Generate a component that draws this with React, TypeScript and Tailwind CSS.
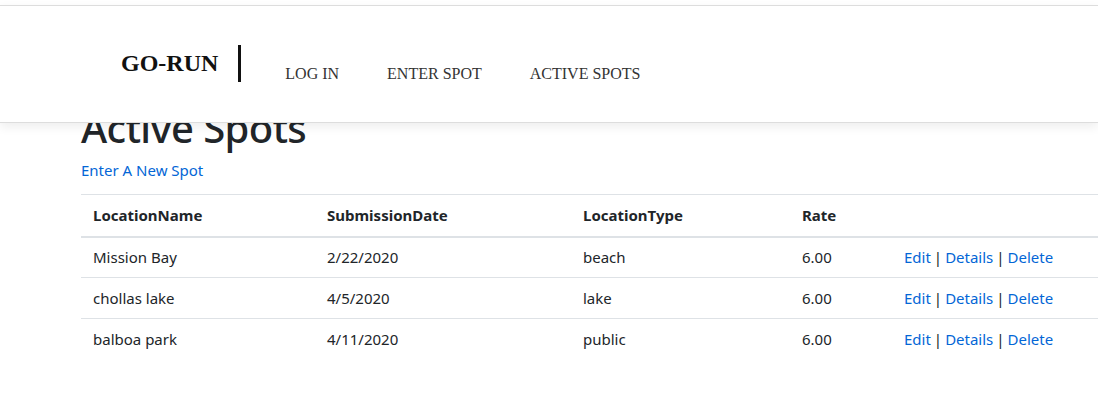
import React from 'react';

const spots = [
  { name: 'Mission Bay', date: '2/22/2020', type: 'beach', rate: '6.00' },
  { name: 'chollas lake', date: '4/5/2020', type: 'lake', rate: '6.00' },
  { name: 'balboa park', date: '4/11/2020', type: 'public', rate: '6.00' },
];

const sans = { fontFamily: '"Noto Sans", "Open Sans", sans-serif' };

export default function App() {
  return (
    <div className="min-h-[406px] bg-white overflow-hidden text-[#212529]" style={sans}>
      <div className="pt-[5px]">
        {/* Navbar */}
        <nav
          className="relative z-10 h-[118px] bg-white border-t border-b border-[#dddddd] shadow-[0_4px_10px_rgba(0,0,0,0.07)] flex items-center pl-[121px]"
          style={{ fontFamily: '"Liberation Serif", "Times New Roman", serif' }}
        >
          <span className="text-[24px] font-bold text-[#111] leading-none -mt-[2px]">GO-RUN</span>
          <span className="ml-[20px] w-[3px] h-[37px] bg-[#111] -mt-[2px]" />
          <div className="flex items-center ml-[20px] mt-[20px] text-[16px] text-[#333]">
            <a className="px-6">LOG IN</a>
            <a className="px-6">ENTER SPOT</a>
            <a className="px-6">ACTIVE SPOTS</a>
          </div>
        </nav>

        {/* Content */}
        <main className="-mt-[19px] pl-[81px]">
          <h1 className="text-[40px] font-medium leading-[48px] tracking-[-0.6px]">Active Spots</h1>
          <a className="block text-[15px] leading-[24px] text-[#0366d6] mt-[6px]">Enter A New Spot</a>

          <table className="mt-[12px] w-full border-collapse text-[15px]">
            <thead>
              <tr className="border-t border-[#dee2e6] border-b-2">
                <th className="w-[234px] h-[42px] px-3 text-left font-bold">LocationName</th>
                <th className="w-[256px] px-3 text-left font-bold">SubmissionDate</th>
                <th className="w-[219px] px-3 text-left font-bold">LocationType</th>
                <th className="w-[102px] px-3 text-left font-bold">Rate</th>
                <th className="px-3" />
              </tr>
            </thead>
            <tbody>
              {spots.map((s) => (
                <tr key={s.name} className="border-t border-[#dee2e6]">
                  <td className="h-[41px] px-3">{s.name}</td>
                  <td className="px-3">{s.date}</td>
                  <td className="px-3">{s.type}</td>
                  <td className="px-3">{s.rate}</td>
                  <td className="px-3 whitespace-nowrap">
                    <a className="text-[#0366d6]">Edit</a>
                    <span className="mx-[3px]">|</span>
                    <a className="text-[#0366d6]">Details</a>
                    <span className="mx-[3px]">|</span>
                    <a className="text-[#0366d6]">Delete</a>
                  </td>
                </tr>
              ))}
            </tbody>
          </table>
        </main>
      </div>
    </div>
  );
}
